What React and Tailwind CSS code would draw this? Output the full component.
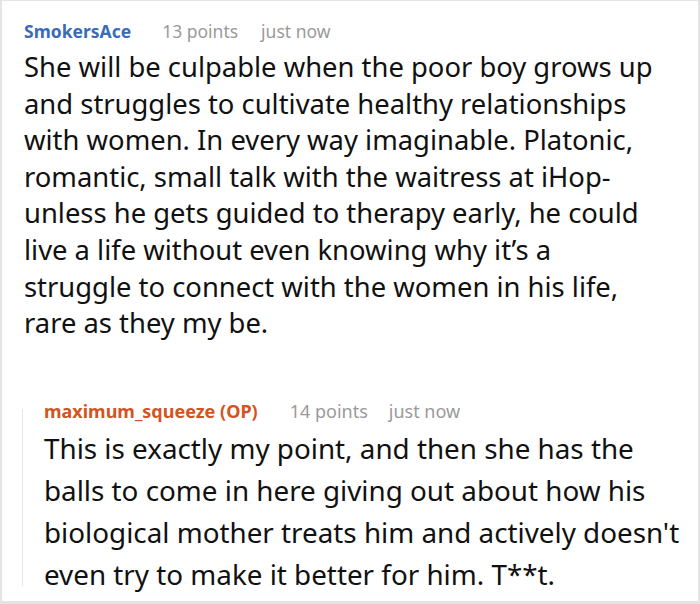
export default function App() {
    return (
        <div className="w-[700px] h-[604px] bg-white border-t border-l-2 border-r-2 border-b-[3px] border-[#e4e4e4] overflow-hidden" style={{ fontFamily: '"Noto Sans", sans-serif' }}>
            <div className="pl-[22px] pr-2 pt-[18px]">
                {/* parent comment */}
                <div className="flex items-center text-[17.5px] leading-6">
                    <span className="font-bold text-[#3a6bb8]">SmokersAce</span>
                    <span className="ml-[31px] text-[#9a9a9a]">13 points</span>
                    <span className="ml-[23px] text-[#9a9a9a]">just now</span>
                </div>
                <p className="mt-[6px] whitespace-nowrap text-[27.4px] leading-[36.6px] text-[#111]">
                    She will be culpable when the poor boy grows up<br />
                    and struggles to cultivate healthy relationships<br />
                    with women. In every way imaginable. Platonic,<br />
                    romantic, small talk with the waitress at iHop-<br />
                    unless he gets guided to therapy early, he could<br />
                    live a life without even knowing why it’s a<br />
                    struggle to connect with the women in his life,<br />
                    rare as they my be.
                </p>

                {/* reply */}
                <div className="mt-[57px] -ml-[2px] flex">
                    <div className="w-px bg-[#e6e6e6] mt-[10px] mb-[9px]" />
                    <div className="pl-[21px]">
                        <div className="flex items-center text-[18px] leading-6">
                            <span className="font-bold text-[#d4531f]">maximum_squeeze (OP)</span>
                            <span className="ml-[32px] text-[#9a9a9a]">14 points</span>
                            <span className="ml-[21px] text-[#9a9a9a]">just now</span>
                        </div>
                        <p className="mt-[4px] whitespace-nowrap text-[27.8px] leading-[42px] text-[#111]">
                            This is exactly my point, and then she has the<br />
                            balls to come in here giving out about how his<br />
                            biological mother treats him and actively doesn't<br />
                            even try to make it better for him. T**t.
                        </p>
                    </div>
                </div>
            </div>
        </div>
    );
}
